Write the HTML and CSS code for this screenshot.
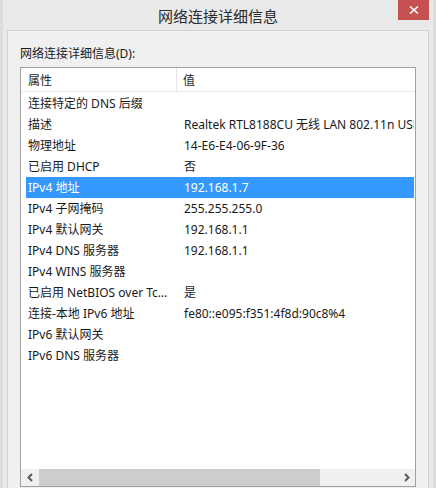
FILE: index.html
```html
<!DOCTYPE html>
<html lang="zh-CN">
<head>
<meta charset="utf-8">
<title>网络连接详细信息</title>
<link rel="stylesheet" href="styles.css">
</head>
<body>
<div class="window">
  <div class="titlebar">
    <span></span>
    <span class="title">网络连接详细信息</span>
    <button class="close" aria-label="关闭">
      <svg width="10" height="8" viewBox="0 0 10 8"><path d="M1 0.5 L9 7.5 M9 0.5 L1 7.5" stroke="#fff" stroke-width="1.6" fill="none"/></svg>
    </button>
  </div>
  <div class="panel">
    <div class="label">网络连接详细信息(D):</div>
    <div class="list">
      <div class="header">
        <div class="hcell c1">属性</div>
        <div class="hcell c2">值</div>
      </div>
      <div class="rows">
        <div class="row"><div class="cell c1">连接特定的 DNS 后缀</div><div class="cell c2"></div></div>
        <div class="row"><div class="cell c1">描述</div><div class="cell c2">Realtek RTL8188CU 无线 LAN 802.11n USB 2.0 网络适配器</div></div>
        <div class="row"><div class="cell c1">物理地址</div><div class="cell c2">14-E6-E4-06-9F-36</div></div>
        <div class="row"><div class="cell c1">已启用 DHCP</div><div class="cell c2">否</div></div>
        <div class="row selected"><div class="cell c1">IPv4 地址</div><div class="cell c2">192.168.1.7</div></div>
        <div class="row"><div class="cell c1">IPv4 子网掩码</div><div class="cell c2">255.255.255.0</div></div>
        <div class="row"><div class="cell c1">IPv4 默认网关</div><div class="cell c2">192.168.1.1</div></div>
        <div class="row"><div class="cell c1">IPv4 DNS 服务器</div><div class="cell c2">192.168.1.1</div></div>
        <div class="row"><div class="cell c1">IPv4 WINS 服务器</div><div class="cell c2"></div></div>
        <div class="row"><div class="cell c1">已启用 NetBIOS over Tcpip</div><div class="cell c2">是</div></div>
        <div class="row"><div class="cell c1">连接-本地 IPv6 地址</div><div class="cell c2">fe80::e095:f351:4f8d:90c8%4</div></div>
        <div class="row"><div class="cell c1">IPv6 默认网关</div><div class="cell c2"></div></div>
        <div class="row"><div class="cell c1">IPv6 DNS 服务器</div><div class="cell c2"></div></div>
      </div>
      <div class="hscroll">
        <div class="arrow">
          <svg width="8" height="9" viewBox="0 0 8 9"><path d="M6 1 L2.5 4.5 L6 8" stroke="#5a5a5a" stroke-width="2" fill="none"/></svg>
        </div>
        <div class="track"><div class="thumb"></div></div>
        <div class="arrow">
          <svg width="8" height="9" viewBox="0 0 8 9"><path d="M2 1 L5.5 4.5 L2 8" stroke="#5a5a5a" stroke-width="2" fill="none"/></svg>
        </div>
      </div>
    </div>
  </div>
</div>
</body>
</html>
```
FILE: styles.css
```css
* { box-sizing: border-box; }
html, body {
  margin: 0;
  padding: 0;
  width: 436px;
  height: 488px;
  overflow: hidden;
  background: #e9e9e9;
}
body {
  font-family: "Noto Sans", "Noto Sans CJK SC", sans-serif;
  color: #1a1a1a;
}
.window {
  width: 436px;
  height: 488px;
  background: #e9e9e9;
  border-left: 3px solid #dcdcdc;
  border-right: 3px solid #dcdcdc;
  padding: 0 4px;
  display: flex;
  flex-direction: column;
}
.titlebar {
  height: 30px;
  flex: none;
  display: grid;
  grid-template-columns: 1fr auto 1fr;
  align-items: start;
}
.title {
  font-size: 15px;
  line-height: 20px;
  padding-top: 6px;
  color: #2b2b2b;
  font-family: "Noto Sans CJK SC", sans-serif;
}
.close {
  justify-self: end;
  width: 31px;
  height: 20px;
  border: none;
  padding: 0;
  margin: 0;
  background: #c75050;
  display: flex;
  align-items: center;
  justify-content: center;
}
.panel {
  flex: 1;
  background: #f0f0f0;
  border: 1px solid #d2d2d2;
  border-bottom: none;
  padding: 14px 12px 0 12px;
}
.label {
  font-size: 12px;
  line-height: 16px;
  height: 16px;
  padding-top: 1px;
  margin-bottom: 6px;
  color: #1a1a1a;
}
.list {
  height: 420px;
  background: #fff;
  border: 1px solid #a0a0a0;
  display: flex;
  flex-direction: column;
}
.header {
  flex: none;
  height: 24px;
  display: flex;
  border-bottom: 1px solid #e8e8e8;
}
.hcell {
  font-size: 12px;
  line-height: 21px;
  padding-top: 2px;
  color: #1e1e1e;
}
.hcell.c1 {
  width: 156px;
  padding-left: 7px;
  border-right: 1px solid #e5e5e5;
}
.hcell.c2 {
  flex: 1;
  padding-left: 6px;
}
.rows {
  flex: 1;
  padding-top: 1px;
  padding-left: 5px;
  padding-right: 1px;
  overflow: hidden;
}
.row {
  height: 21px;
  display: flex;
  font-size: 12px;
  line-height: 20px;
  padding-top: 1px;
  color: #1a1a1a;
}
.row.selected {
  background: #3399ff;
  color: #fff;
}
.cell {
  white-space: nowrap;
  overflow: hidden;
}
.cell.c1 {
  width: 151px;
  flex: none;
  padding-left: 2px;
  padding-right: 3px;
  text-overflow: ellipsis;
}
.cell.c2 {
  flex: 1;
  min-width: 0;
  padding-left: 7px;
}
.hscroll {
  flex: none;
  height: 17px;
  display: flex;
  background: #f0f0f0;
}
.arrow {
  width: 17px;
  height: 17px;
  display: flex;
  align-items: center;
  justify-content: center;
}
.track {
  flex: 1;
  display: flex;
  padding-left: 1px;
}
.thumb {
  width: 281px;
  height: 17px;
  background: #cdcdcd;
}
```
